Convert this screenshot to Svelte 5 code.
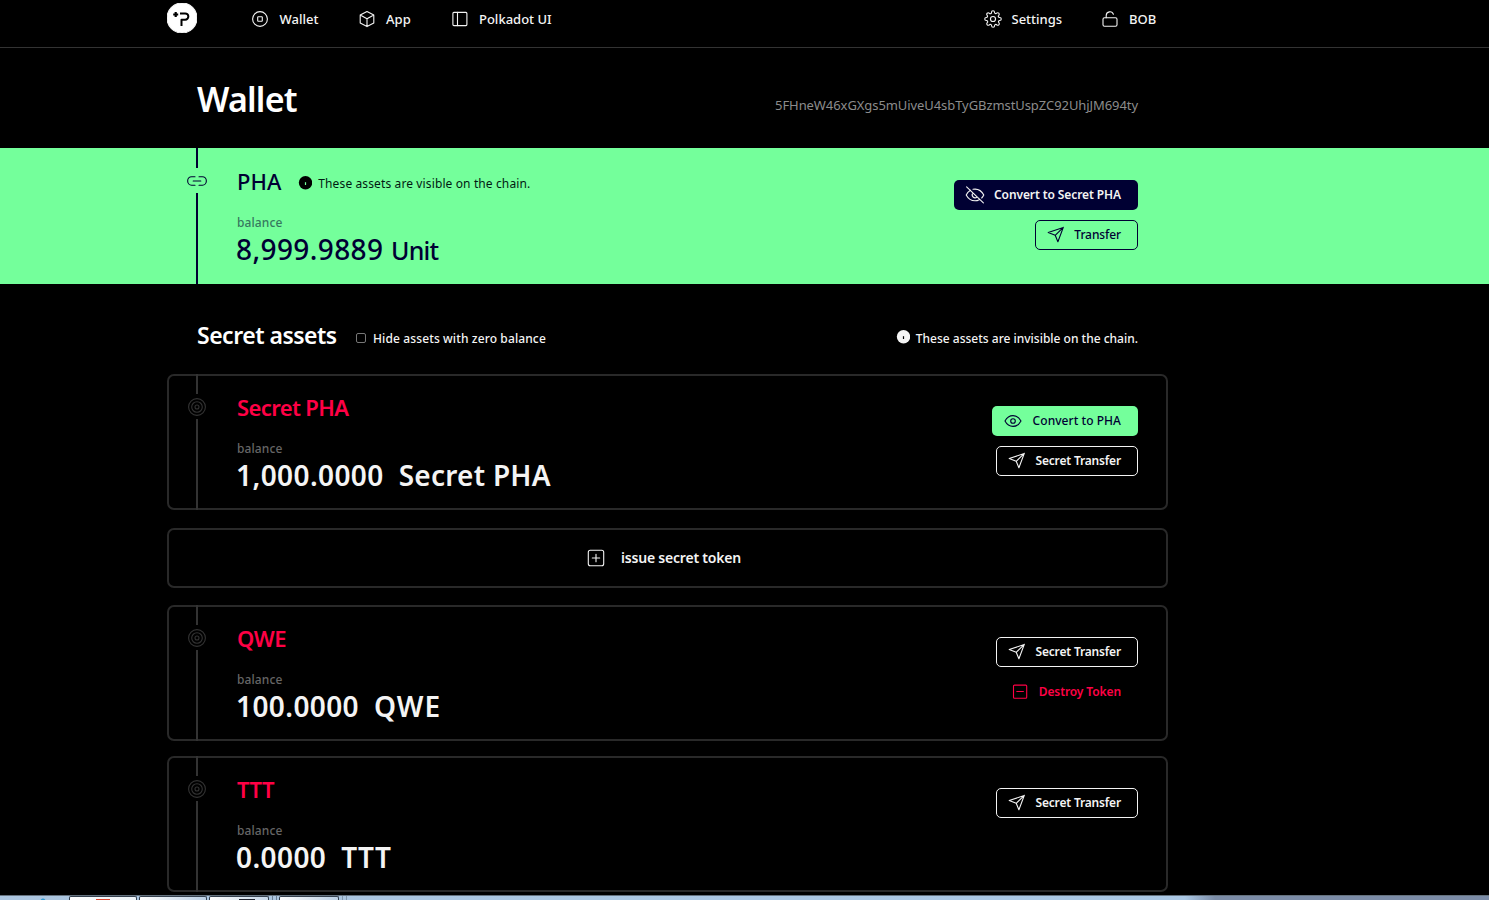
<script>
  const tokens = [
    { name: 'Secret PHA', amount: '1,000.0000', kind: 'native' },
    { name: 'QWE', amount: '100.0000', kind: 'owned' },
    { name: 'TTT', amount: '0.0000', kind: 'other' }
  ];
</script>

{#snippet plane()}
  <svg class="plane" width="18" height="18" viewBox="0 0 18 18"><path d="M1.2 6.6 16.3 1.4 10.9 15.7 8.2 9.3ZM8.2 9.3 16.3 1.4" /></svg>
{/snippet}

{#snippet info()}
  <svg class="info" width="14" height="14" viewBox="0 0 14 14"><circle cx="7.5" cy="6.800" r="6.7" /><path d="M7.5 6.200v2.800" /></svg>
{/snippet}

{#snippet rail(kind)}
  <div class="rail">
    <i class="top"></i>
    {#if kind === 'link'}
      <svg width="20" height="25" viewBox="0 0 20 25"><path d="M8 8.7H4.6a3.9 4.2 0 0 0 0 8.5H8M12 8.7h3.4a3.9 4.2 0 0 1 0 8.5H12M6.2 13h7.6" /></svg>
    {:else}
      <svg width="20" height="25" viewBox="0 0 20 25"><circle cx="10" cy="13" r="8.4" /><circle cx="10" cy="13" r="5.3" /><circle cx="10" cy="13" r="2" /></svg>
    {/if}
    <i class="rest"></i>
  </div>
{/snippet}

<div class="page">
  <header>
    <div class="bar">
      <svg class="logo" width="30" height="30" viewBox="0 0 30 30"><circle cx="15" cy="15" r="15" fill="#fff" /><path d="M13 10.400h5.200a3.150 3.150 0 0 1 0 6.300h-3.700v6.300" fill="none" stroke="#000" stroke-width="2" /><path d="M8.700 9v5M6.200 11.500h5" stroke="#000" stroke-width="2.200" /></svg>
      <nav>
        <a class="n-wallet" href="#wallet"><svg width="18" height="18" viewBox="0 0 18 18"><circle cx="9" cy="9" r="7.4" /><rect x="6.7" y="6.7" width="4.6" height="4.6" rx=".6" /></svg><span>Wallet</span></a>
        <a class="n-app" href="#app"><svg width="18" height="18" viewBox="0 0 18 18"><path d="M9 1.5 15.8 5v8L9 16.6 2.2 13V5ZM2.2 5 9 8.8 15.8 5M9 8.8v7.8" /></svg><span>App</span></a>
        <a class="n-dot" href="#polkadot"><svg width="18" height="18" viewBox="0 0 18 18"><rect x="1.9" y="2.4" width="14" height="13.2" rx="1" /><path d="M6.5 2.4v13.2" /></svg><span>Polkadot UI</span></a>
      </nav>
      <nav class="right">
        <a class="n-set" href="#settings"><svg width="18" height="18" viewBox="0 0 24 24"><circle cx="12" cy="12" r="3.4" stroke-width="1.5" /><path stroke-width="1.5" d="M19.4 15a1.65 1.65 0 0 0 .33 1.82l.06.06a2 2 0 1 1-2.83 2.83l-.06-.06a1.65 1.65 0 0 0-2.8 1.17V21a2 2 0 0 1-4 0v-.09A1.65 1.65 0 0 0 7.2 19.73l-.06.06a2 2 0 1 1-2.83-2.83l.06-.06A1.65 1.65 0 0 0 3.09 14H3a2 2 0 0 1 0-4h.09A1.65 1.65 0 0 0 4.27 7.2l-.06-.06a2 2 0 1 1 2.83-2.83l.06.06A1.65 1.65 0 0 0 10 3.09V3a2 2 0 0 1 4 0v.09a1.65 1.65 0 0 0 2.8 1.18l.06-.06a2 2 0 1 1 2.83 2.83l-.06.06A1.65 1.65 0 0 0 20.91 10H21a2 2 0 0 1 0 4h-.09a1.65 1.65 0 0 0-1.51 1z" /></svg><span>Settings</span></a>
        <a class="n-bob" href="#account"><svg width="18" height="18" viewBox="0 0 18 18"><rect x="2" y="7.8" width="14" height="8.4" rx="1.5" /><path d="M5.2 7.8V5.4a3.7 3.7 0 0 1 7.2-1.1" /></svg><span>BOB</span></a>
      </nav>
    </div>
  </header>

  <section class="title">
    <h1>Wallet</h1>
    <span class="addr">5FHneW46xGXgs5mUiveU4sbTyGBzmstUspZC92UhjJM694ty</span>
  </section>

  <section class="public">
    <div class="asset">
      {@render rail('link')}
      <div class="body">
        <div class="head"><h3>PHA</h3>{@render info()}<span class="note">These assets are visible on the chain.</span></div>
        <div class="label">balance</div>
        <div class="amount">8,999.9889 <small>Unit</small></div>
      </div>
      <div class="actions">
        <button class="navy"><svg width="20" height="18" viewBox="0 0 20 18"><path d="M5.5 4.2C3.6 5.3 2.2 7 1.2 9c2 3.8 5 5.8 8.8 5.8 1.6 0 3-.4 4.2-1.1M8 3.3c4.8-.8 8.5 1.3 10.8 5.7-.6 1.2-1.3 2.2-2.1 3M7.9 7.2a2.8 2.8 0 0 0 4 3.9M1.6.8l16.8 16" /></svg><span class="t-csp">Convert to Secret PHA</span></button>
        <button class="outline-navy">{@render plane()}<span class="t-tr">Transfer</span></button>
      </div>
    </div>
  </section>

  <section class="subhead">
    <h2>Secret assets</h2>
    <label><i class="check"></i><span>Hide assets with zero balance</span></label>
    <div class="invisible">{@render info()}<span>These assets are invisible on the chain.</span></div>
  </section>

  <main>
    {#each tokens as t}
      <article class="card asset {t.kind}">
        {@render rail('target')}
        <div class="body">
          <div class="head"><h3>{t.name}</h3></div>
          <div class="label">balance</div>
          <div class="amount">{t.amount}<span class="unit">{t.name}</span></div>
        </div>
        <div class="actions">
          {#if t.kind === 'native'}
            <button class="green"><svg width="18" height="18" viewBox="0 0 18 18"><path d="M1 9c3.8-7.2 12.200-7.2 16 0-3.800 7.200-12.200 7.200-16 0Z" /><circle cx="9" cy="9" r="2.300" /></svg><span class="t-cp">Convert to PHA</span></button>
          {/if}
          <button class="outline">{@render plane()}<span class="t-st">Secret Transfer</span></button>
          {#if t.kind === 'owned'}
            <button class="destroy"><svg width="16" height="16" viewBox="0 0 16 16"><rect x="1.500" y="1.100" width="13.200" height="13.200" rx="1" /><path d="M4.800 7.500h6.600" /></svg><span class="t-dt">Destroy Token</span></button>
          {/if}
        </div>
      </article>
      {#if t.kind === 'native'}
        <button class="card issue"><svg width="18" height="18" viewBox="0 0 18 18"><rect x="1.300" y="1.300" width="15.400" height="15.400" rx="2" /><path d="M5.300 9h7.400M9 5.300v7.400" /></svg><span>issue secret token</span></button>
      {/if}
    {/each}
  </main>

  <footer>
    <i class="start"></i><i class="task red"></i><i class="gap"></i><i class="task w2"></i><i class="gap"></i><i class="task dark"></i><i class="gap wide"></i><i class="task w4"></i><i class="gap end"></i>
  </footer>
</div>

<style>
  :global(body) { background: #000; overflow: hidden; }
  .page { width: 1489px; height: 900px; overflow: hidden; display: flex; flex-direction: column; background: #000; color: #f4f4f4; font-family: "Noto Sans", "Open Sans", sans-serif; font-size: 13px; font-weight: 500; }
  .page * { box-sizing: border-box; }
  h1, h2, h3 { margin: 0; font-weight: 600; }
  span, h1, h2, h3, .amount { white-space: nowrap; }
  svg { fill: none; stroke: currentColor; stroke-width: 1.1; flex: none; stroke-linejoin: round; stroke-linecap: round; }
  .logo { stroke-linecap: butt; }
  header { height: 48px; border-bottom: 1px solid #333; flex: none; }
  .bar { width: 1001px; margin-left: 167px; height: 38px; display: flex; align-items: center; }
  .logo { margin-top: -2px; }
  nav { display: flex; margin-left: 54px; }
  .right { margin-left: auto; margin-right: 12px; }
  a { color: #f4f4f4; text-decoration: none; display: flex; align-items: center; height: 24px; }
  a svg { margin-right: 10px; }
  a span { display: block; line-height: 20px; }
  .n-wallet { width: 107px; letter-spacing: 0.05px; }
  .n-app { width: 93px; letter-spacing: 0.1px; }
  .n-dot { width: 103px; }
  .n-set { width: 118px; }
  .n-bob { width: 55px; }
  .n-set svg { margin-left: 1px; margin-right: 9.5px; }
  .n-wallet svg { margin-left: 0.4px; }
  .n-bob svg { margin-right: 10px; margin-left: 0; }
  .title { height: 100px; flex: none; width: 941px; margin-left: 197px; display: flex; justify-content: space-between; }
  h1 { font-size: 34px; line-height: 48px; padding-top: 27px; color: #fff; letter-spacing: -0.8px; }
  .addr { color: #8c8c8c; font-weight: 400; line-height: 20px; padding-top: 47px; letter-spacing: -0.075px; }
  .public { background: #74ff9b; height: 136px; flex: none; color: #000033; padding-left: 167px; }
  .asset { width: 1001px; height: 136px; display: flex; }
  .rail { width: 20px; margin-left: 20px; display: flex; flex-direction: column; align-items: center; color: #333; }
  .rail i { width: 2px; background: #333; display: block; }
  .rail .top { height: 20px; }
  .rail .rest { flex: 1; }
  .public .rail { color: #000033; }
  .public .rail i { background: #000033; }
  .body { margin-left: 30px; padding-top: 18px; }
  .head { display: flex; height: 30px; align-items: center; }
  h3 { font-size: 22px; line-height: 30px; }
  .public h3 { font-weight: 500; }
  .card h3 { letter-spacing: -0.62px; }
  .owned h3, .other h3 { letter-spacing: -0.4px; }
  .info { fill: currentColor; stroke: none; }
  .info path { stroke: #74ff9b; stroke-width: 1.2; stroke-linecap: butt; }
  .head .info { color: #000; margin-left: 17px; margin-top: 3px; }
  .note { color: #001a12; font-size: 12px; font-weight: 400; margin-left: 6px; line-height: 20px; padding-top: 6px; letter-spacing: 0.12px; }
  .label { font-size: 12px; line-height: 18px; margin-top: 18px; color: #666; letter-spacing: 0.1px; }
  .public .label { color: #36795f; }
  .amount { font-size: 28px; line-height: 36px; margin-top: -1px; margin-left: -1px; font-weight: 600; letter-spacing: 0.4px; }
  .public .amount { font-weight: 500; letter-spacing: 0.4px; }
  .amount small { font-size: 25px; letter-spacing: -0.8px; }
  .unit { margin-left: 15px; }
  .native .unit { letter-spacing: 0.25px; }
  .owned .unit { letter-spacing: 1px; }
  .actions { margin-left: auto; padding-top: 32px; padding-right: 30px; display: flex; flex-direction: column; align-items: flex-end; gap: 10px; }
  button { font-family: inherit; font-weight: 500; font-size: 12px; cursor: pointer; }
  .actions button { height: 30px; display: flex; align-items: center; justify-content: space-between; padding: 0 16px 0 11px; border: 1px solid transparent; border-radius: 5px; background: transparent; flex: none; }
  .actions button span { line-height: 18px; }
  .actions .navy { width: 184px; background: #000033; color: #f4f4f4; padding-left: 10px; font-weight: 600; }
  .t-csp { letter-spacing: -0.1px; }
  .t-st { letter-spacing: -0.17px; }
  .t-dt { letter-spacing: -0.1px; }
  .t-cp { letter-spacing: 0.05px; }
  .actions .outline-navy { width: 103px; border-color: #000033; color: #000033; }
  .t-tr { letter-spacing: -0.1px; }
  .actions .green { width: 146px; background: #74ff9b; color: #000033; }
  .actions .outline { width: 142px; border-color: #f4f4f4; color: #f4f4f4; font-weight: 600; }
  .actions .destroy { width: 142px; color: #ff0045; padding-left: 15px; font-weight: 600; }
  .subhead { width: 941px; margin-left: 197px; height: 90px; flex: none; display: flex; padding-top: 34px; color: #f4f4f4; }
  h2 { font-size: 23px; line-height: 34px; color: #fff; width: 139px; letter-spacing: -0.5px; }
  label { display: flex; align-items: center; height: 20px; margin: 10px 0 0 20px; font-size: 12px; letter-spacing: 0.12px; }
  .check { width: 10px; height: 10px; border: 1px solid #777; border-radius: 2px; margin-right: 7px; }
  .invisible { margin-left: auto; margin-top: 10px; height: 20px; display: flex; align-items: center; gap: 5.5px; font-size: 12px; }
  .invisible .info { margin-top: -3px; }
  .invisible .info path { stroke: #000; }
  main { margin-left: 167px; width: 1001px; height: 521px; flex: none; }
  .card { border: 2px solid #292929; border-radius: 7px; background: #000; color: #f4f4f4; }
  .card .rail { margin-left: 18px; margin-top: -2px; margin-bottom: -2px; }
  .card .body { margin-top: -2px; }
  .card .actions { margin-top: -2px; padding-right: 28px; }
  .card h3 { color: #ff0045; }
  .issue { width: 1001px; height: 60px; margin: 18px 0 17px; display: flex; align-items: center; padding: 0 0 0 418px; font-size: 14px; font-weight: 600; letter-spacing: -0.2px; }
  .issue span { margin-left: 16px; margin-top: -2px; }
  .other { margin-top: 15px; }
  footer { height: 5px; flex: none; display: flex; border-top: 1px solid #65727e; background: linear-gradient(90deg, #abc5df 0, #abc8e5 1185px, #7c8da8 1215px, #7c8da8 100%); }
  footer i { display: block; height: 4px; }
  .start { width: 69px; background: radial-gradient(circle at 43px 5px, #359bd1 2px, transparent 3px); }
  .task { width: 68px; border: 1px solid #34404e; border-bottom: 0; border-radius: 2px 2px 0 0; background: linear-gradient(90deg, #fff, #e9eff6); }
  .task.red { background: linear-gradient(#dd442f, #dd442f) 26px 2px / 14px 2px no-repeat, linear-gradient(90deg, #fff, #edf3f8); }
  .task.dark { width: 60px; background: linear-gradient(#222632, #222632) 29px 2px / 16px 2px no-repeat, linear-gradient(90deg, #fff, #c7d8ea); }
  .w2 { background: linear-gradient(90deg, #fff, #bbcfe4); }
  .w4 { width: 60px; background: linear-gradient(90deg, #fff, #bbcfe4); }
  .gap { width: 2px; }
  .wide { width: 10px; background: repeating-linear-gradient(90deg, #abc5df 0 3px, #6b7f94 3px 4px); }
  .end { width: 8px; background: repeating-linear-gradient(90deg, #abc5df 0 3px, #8197ad 3px 4px); }
</style>
